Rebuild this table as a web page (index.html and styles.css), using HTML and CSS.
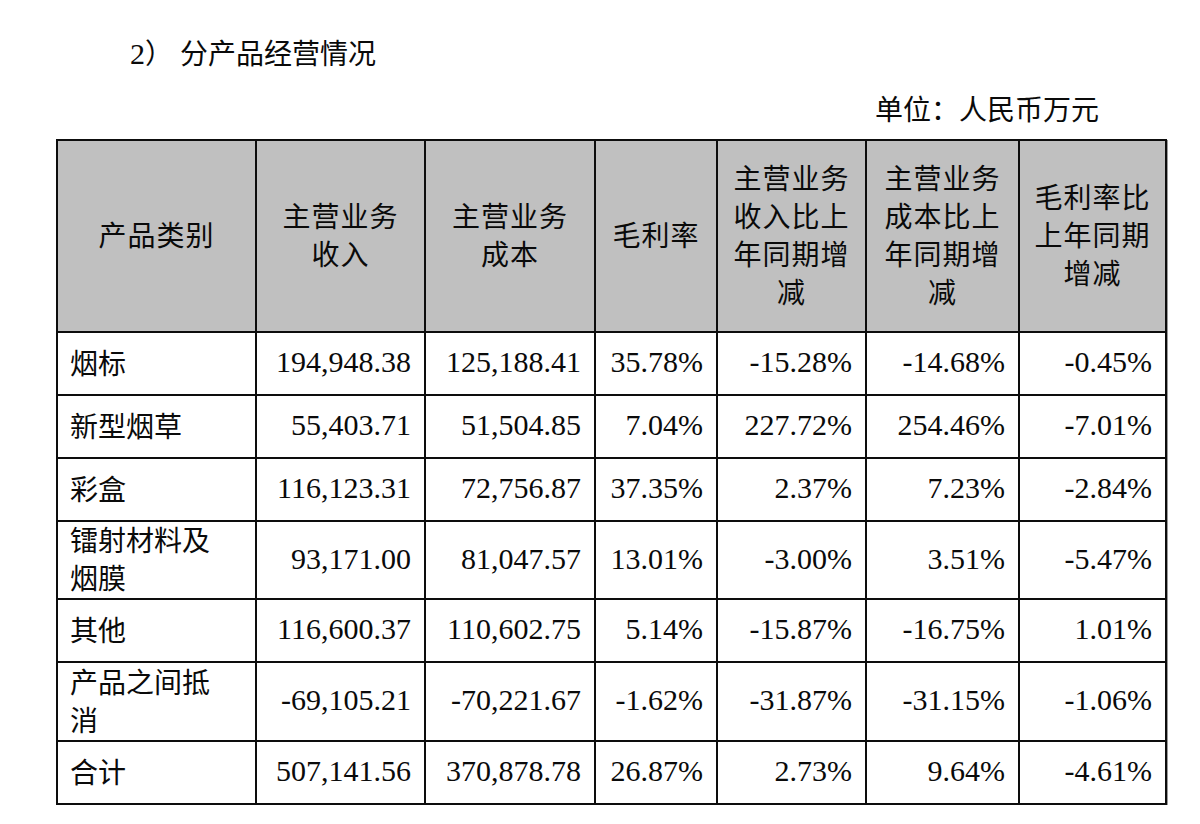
FILE: index.html
```html
<!DOCTYPE html>
<html lang="zh-CN">
<head>
<meta charset="utf-8">
<title>分产品经营情况</title>
<link rel="stylesheet" href="styles.css">
</head>
<body>
<div class="page">
  <div class="title"><span class="num">2</span>） 分产品经营情况</div>
  <div class="unit">单位：人民币万元</div>
  <div class="table">
    <div class="cell head">产品类别</div>
    <div class="cell head">主营业务<br>收入</div>
    <div class="cell head">主营业务<br>成本</div>
    <div class="cell head">毛利率</div>
    <div class="cell head">主营业务<br>收入比上<br>年同期增<br>减</div>
    <div class="cell head">主营业务<br>成本比上<br>年同期增<br>减</div>
    <div class="cell head">毛利率比<br>上年同期<br>增减</div>

    <div class="cell name">烟标</div>
    <div class="cell val">194,948.38</div>
    <div class="cell val">125,188.41</div>
    <div class="cell val">35.78%</div>
    <div class="cell val">-15.28%</div>
    <div class="cell val">-14.68%</div>
    <div class="cell val">-0.45%</div>

    <div class="cell name">新型烟草</div>
    <div class="cell val">55,403.71</div>
    <div class="cell val">51,504.85</div>
    <div class="cell val">7.04%</div>
    <div class="cell val">227.72%</div>
    <div class="cell val">254.46%</div>
    <div class="cell val">-7.01%</div>

    <div class="cell name">彩盒</div>
    <div class="cell val">116,123.31</div>
    <div class="cell val">72,756.87</div>
    <div class="cell val">37.35%</div>
    <div class="cell val">2.37%</div>
    <div class="cell val">7.23%</div>
    <div class="cell val">-2.84%</div>

    <div class="cell name">镭射材料及<br>烟膜</div>
    <div class="cell val">93,171.00</div>
    <div class="cell val">81,047.57</div>
    <div class="cell val">13.01%</div>
    <div class="cell val">-3.00%</div>
    <div class="cell val">3.51%</div>
    <div class="cell val">-5.47%</div>

    <div class="cell name">其他</div>
    <div class="cell val">116,600.37</div>
    <div class="cell val">110,602.75</div>
    <div class="cell val">5.14%</div>
    <div class="cell val">-15.87%</div>
    <div class="cell val">-16.75%</div>
    <div class="cell val">1.01%</div>

    <div class="cell name">产品之间抵<br>消</div>
    <div class="cell val">-69,105.21</div>
    <div class="cell val">-70,221.67</div>
    <div class="cell val">-1.62%</div>
    <div class="cell val">-31.87%</div>
    <div class="cell val">-31.15%</div>
    <div class="cell val">-1.06%</div>

    <div class="cell name">合计</div>
    <div class="cell val">507,141.56</div>
    <div class="cell val">370,878.78</div>
    <div class="cell val">26.87%</div>
    <div class="cell val">2.73%</div>
    <div class="cell val">9.64%</div>
    <div class="cell val">-4.61%</div>
  </div>
</div>
</body>
</html>
```
FILE: styles.css
```css
html, body {
  margin: 0;
  padding: 0;
  background: #ffffff;
}

body {
  font-family: "Liberation Serif", "Noto Sans CJK SC", serif;
  color: #0a0a0a;
  font-size: 28px;
}

.page {
  padding: 35px 0 0 56px;
  width: 1111px;
}

.title {
  height: 38px;
  line-height: 38px;
  padding-left: 74px;
  font-family: "Liberation Serif", "Noto Sans CJK SC", serif;
}

.title .num {
  font-size: 30px;
}

.unit {
  margin-top: 16px;
  height: 38px;
  line-height: 38px;
  text-align: right;
  padding-right: 68px;
  font-family: "Noto Sans CJK SC", sans-serif;
}

.table {
  margin-top: 12px;
  display: grid;
  grid-template-columns: 197px 167px 168px 120px 147px 151px 145px;
  grid-template-rows: 190px 61px 61px 61px 76px 61px 77px 61px;
  gap: 2px;
  padding: 2px;
  background: #0d0d0d;
  width: max-content;
  box-shadow: 1px 1px 0 #9a9a9a;
}

.cell {
  background: #ffffff;
  display: flex;
  align-items: center;
  line-height: 38px;
}

.head {
  background: #c0c0c0;
  justify-content: center;
  text-align: center;
  font-family: "Noto Sans CJK SC", sans-serif;
  letter-spacing: 1px;
  padding-bottom: 4px;
}

.name {
  padding-left: 12px;
  padding-bottom: 4px;
  font-family: "Noto Sans CJK SC", sans-serif;
}

.val {
  justify-content: flex-end;
  padding-right: 13px;
  padding-bottom: 3px;
  font-size: 30px;
  font-family: "Liberation Serif", serif;
}
```
